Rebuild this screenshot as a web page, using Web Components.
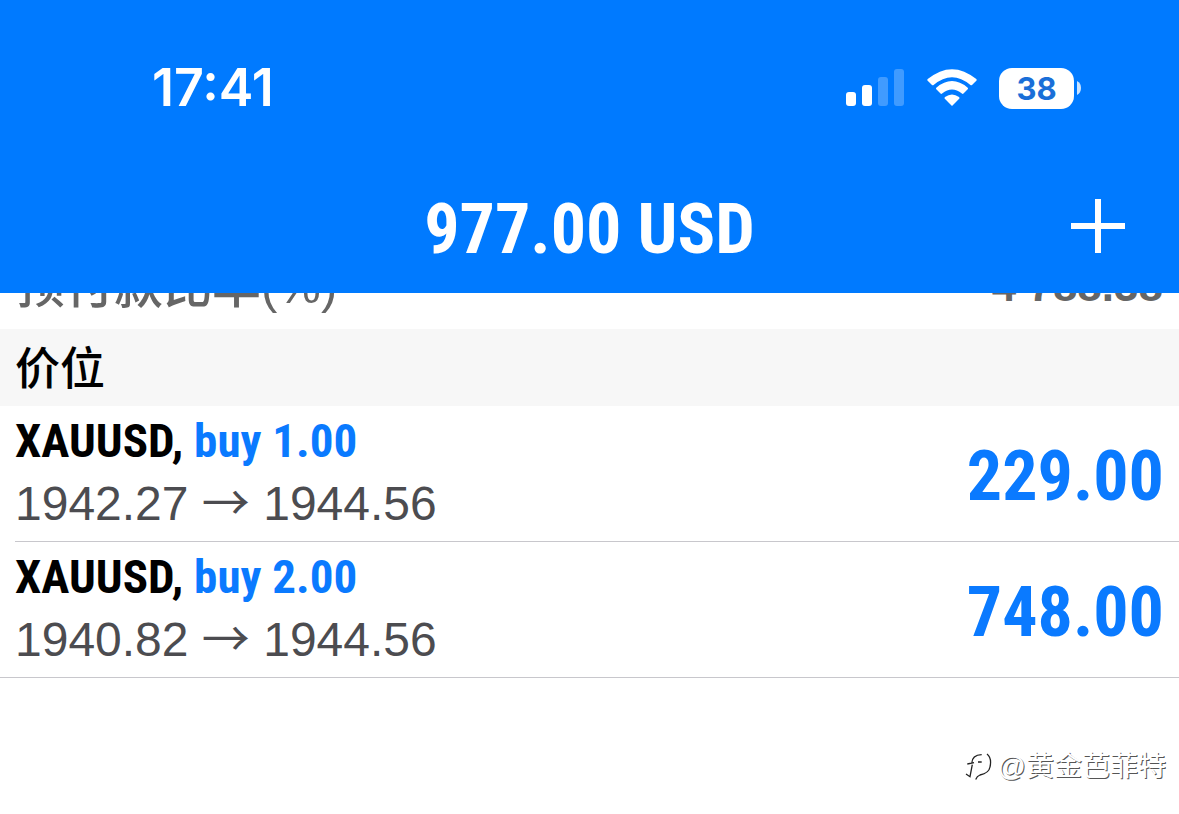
<!DOCTYPE html>
<html lang="zh-CN">
<head>
<meta charset="utf-8">
<meta name="viewport" content="width=device-width, initial-scale=1">
<title>977.00 USD</title>
<style>
  body { margin: 0; background: #fff; }
</style>
</head>
<body>
<trade-screen></trade-screen>
<script>
const define = (name, html) => customElements.define(name, class extends HTMLElement {
  constructor() {
    super();
    const t = document.createElement('template');
    t.innerHTML = html;
    this.attachShadow({ mode: 'open' }).append(t.content.cloneNode(true));
  }
});

define('status-bar', `
<style>
  :host { display: flex; justify-content: space-between; align-items: center; height: 60px;
    padding: 58px 98px 0 152px; color: #fff; font: 600 52px/60px Inter, "Liberation Sans", sans-serif; }
  .icons { display: flex; align-items: center; gap: 22px; }
  .battery { display: flex; align-items: center; gap: 3px; }
  .level { width: 75px; height: 41px; border-radius: 13px; background: #fff; color: #1a6fd8;
    font-size: 31px; line-height: 42px; font-weight: 700; text-align: center; }
  svg { display: block; }
</style>
<time>17:41</time>
<div class="icons">
  <svg width="59" height="38" viewBox="0 0 59 38" fill="#fff" aria-label="信号">
    <rect x="0" y="23" width="10" height="14" rx="3"/><rect x="16" y="16" width="10" height="21" rx="3"/>
    <g opacity=".25"><rect x="32" y="8" width="10" height="29" rx="3"/><rect x="48" y="0" width="10" height="37" rx="3"/></g>
  </svg>
  <svg width="50" height="38" viewBox="0 0 50 38" aria-label="Wi-Fi">
    <g fill="#fff">
      <path d="M25 37 17.800 29.800Q17 29 18 28Q25 23 32 28Q33 29 32.200 29.800Z"/>
      <path d="M9.300 20.300Q8.500 19.500 9.300 18.700Q25 5.500 40.700 18.700Q41.500 19.500 40.700 20.300L36.500 24.500Q35.700 25.300 34.900 24.500Q25 16.500 15.100 24.500Q14.300 25.300 13.500 24.500Z"/>
      <path d="M.7 11.700Q-.1 10.900.7 10.100Q25-9.800 49.300 10.100Q50.100 10.900 49.300 11.700L45 16Q44.200 16.700 43.400 16Q25 .5 6.600 16Q5.800 16.700 5 16Z"/>
    </g>
  </svg>
  <div class="battery"><span class="level">38</span>
    <svg width="4" height="14" viewBox="0 0 4 14"><path d="M0 0Q4 2 4 7T0 14Z" fill="#fff" opacity=".8"/></svg>
  </div>
</div>`);

define('balance-bar', `
<style>
  :host { display: grid; grid-template-columns: 1fr auto 1fr; align-items: center; height: 84px;
    padding: 66px 54px 25px; color: #fff; }
  h1 { grid-column: 2; margin: 0; padding-top: 6px; font: 700 70px/78px "Roboto Condensed", "Liberation Sans", sans-serif; }
  button { justify-self: end; padding: 0; border: 0; background: none; color: inherit; }
  svg { display: block; }
</style>
<h1><slot></slot></h1>
<button aria-label="新增"><svg width="54" height="54" viewBox="0 0 54 54" stroke="currentColor" stroke-width="6"><path d="M27 0V54M0 27H54"/></svg></button>`);

define('account-row', `
<style>
  :host { display: flex; justify-content: space-between; padding: 0 16px; height: 60px;
    color: #666; font: 700 44px/60px "Liberation Sans", "Noto Sans CJK SC", sans-serif; }
  .label { font-weight: 500; font-size: 49px; }
</style>
<span class="label"><slot name="label"></slot></span><span><slot></slot></span>`);

define('section-title', `
<style>
  :host { display: block; background: #f7f7f7; }
  h2 { margin: 0; padding: 0 15px 3px; color: #000; font: 500 45px/74px "Noto Sans CJK SC", sans-serif; }
</style>
<h2><slot></slot></h2>`);

define('position-row', `
<style>
  :host { display: block; padding-left: var(--inset, 0); }
  .row { display: flex; justify-content: space-between; align-items: center; height: 136px;
    padding: 0 15px 0 calc(15px - var(--inset, 0px)); box-sizing: border-box; border-bottom: 1px solid #c8c7cc; }
  p { margin: 0; white-space: nowrap; }
  .deal { font: 700 47px/60px "Roboto Condensed", "Liberation Sans", sans-serif; color: #000; }
  .side, .profit { color: #0a7aff; }
  .price { font: 400 48px/66px "Liberation Sans", sans-serif; color: #4c4c50; }
  .arrow { font-family: "Noto Sans CJK SC", sans-serif; line-height: 0; }
  .profit { font: 700 70px/84px "Roboto Condensed", "Liberation Sans", sans-serif; padding-top: 4px; }
</style>
<div class="row">
  <div>
    <p class="deal"><slot name="symbol"></slot>, <span class="side"><slot name="side"></slot></span></p>
    <p class="price"><slot name="open"></slot> <span class="arrow">→</span> <slot name="current"></slot></p>
  </div>
  <span class="profit"><slot name="profit"></slot></span>
</div>`);

define('water-mark', `
<style>
  :host { display: flex; justify-content: flex-end; align-items: center; gap: 5px; padding: 67px 13px 0 0;
    color: #fff; font: 400 28px/44px "Liberation Sans", "Noto Sans CJK SC", sans-serif; text-shadow: 1px 1px 0 #555; }
  svg { display: block; }
</style>
<svg width="28" height="28" viewBox="0 0 28 28" fill="none" stroke="#222" stroke-width="1.300"><path d="M6.700 10.500Q7 2 16.700 1.700M2.300 11 9 9.700M7.300 11.700 5 23.700 1 21M13 9H16.700M22 1Q27 5 25 14Q24 20 15 22Q12 23 10.700 26.500"/></svg>
<span><slot></slot></span>`);

define('trade-screen', `
<style>
  :host { display: block; min-height: 100vh; background: #fff; }
  header { position: relative; z-index: 1; background: #007aff; }
  account-row { margin-top: -37px; padding-bottom: 13px; }
  .inset { --inset: 15px; }
</style>
<header><status-bar></status-bar><balance-bar>977.00 USD</balance-bar></header>
<main>
  <account-row><span slot="label">预付款比率(%)</span>4 788.38</account-row>
  <section-title>价位</section-title>
  <position-row class="inset"><span slot="symbol">XAUUSD</span><span slot="side">buy 1.00</span><span slot="open">1942.27</span><span slot="current">1944.56</span><span slot="profit">229.00</span></position-row>
  <position-row><span slot="symbol">XAUUSD</span><span slot="side">buy 2.00</span><span slot="open">1940.82</span><span slot="current">1944.56</span><span slot="profit">748.00</span></position-row>
</main>
<water-mark>@黄金芭菲特</water-mark>`);
</script>
</body>
</html>
